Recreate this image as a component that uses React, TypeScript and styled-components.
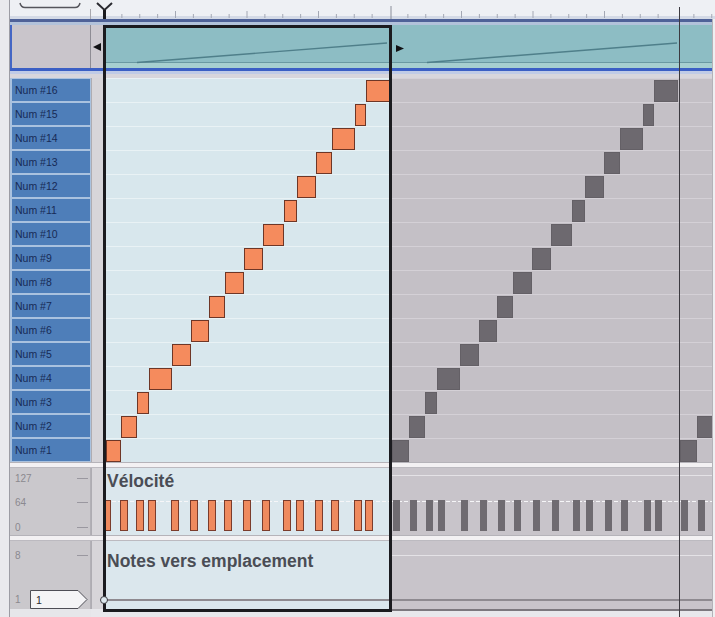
import React from 'react';
import styled, { createGlobalStyle, css } from 'styled-components';

const GlobalStyle = createGlobalStyle`
  html, body { margin: 0; padding: 0; background: #e8e8ec; }
  body { font-family: 'Liberation Sans', Arial, sans-serif; }
  * { box-sizing: border-box; }
`;

type Tone = 'loop' | 'gray';

const ROW_H = 24;
const ROWS = 16;
// note starts inside one pattern (px from the pattern origin), last value = pattern length
const PATTERN = [0, 17, 33, 45, 68, 87, 105, 121, 140, 159, 180, 193, 212, 228, 251, 262, 286];

const Frame = styled.div`
  width: 715px;
  height: 617px;
  overflow: hidden;
  display: flex;
  flex-direction: column;
  background: #e8e8ec;
`;

const RulerSvg = styled.svg`
  display: block;
  flex: none;
`;

const Body = styled.div`
  display: flex;
  flex: 1;
  min-height: 0;
`;

const Column = styled.div<{ $w: number }>`
  width: ${({ $w }) => $w}px;
  flex: none;
  display: flex;
  flex-direction: column;
`;

const MarginCol = styled.div`
  width: 10px;
  flex: none;
  background: #e9e9ed;
  border-right: 1px solid #9c9ca4;
`;

const EdgeCol = styled.div`
  flex: 1;
  background: #efeff1;
  border-left: 1px solid #b4b2b8;
`;

const TopBlue = styled.div`
  height: 6px;
  flex: none;
  background: linear-gradient(#4f6298 0 3px, #b2c2da 3px 6px);
`;

const BottomBlue = styled.div`
  height: 6px;
  flex: none;
  background: linear-gradient(#3b5fc4 0 3px, #c0cbe6 3px 6px);
`;

const Gap = styled.div`
  height: 4px;
  flex: none;
  background: #d8d6dc;
`;

const Sep = styled.div`
  height: 6px;
  flex: none;
  background: linear-gradient(#b5b3b9 0 1px, #f3f1f3 1px 5px, #bcbac0 5px 6px);
`;

const LoopBox = styled.div`
  display: flex;
  flex-direction: column;
  border: 3px solid #1b1b1f;
`;

const SegHeader = styled.div<{ $h: number }>`
  height: ${({ $h }) => $h}px;
  flex: none;
  display: flex;
  background: linear-gradient(
    to bottom,
    #8dbdc4 0,
    #8dbdc4 calc(100% - 6px),
    #6a99a2 calc(100% - 6px),
    #6a99a2 calc(100% - 5px),
    #a6cfd0 calc(100% - 5px)
  );
  svg {
    display: block;
    width: 100%;
    height: 100%;
  }
`;

const Grid = styled.div<{ $tone: Tone }>`
  position: relative;
  height: ${ROWS * ROW_H}px;
  flex: none;
  display: flex;
  flex-direction: column;
  overflow: hidden;
  background: ${({ $tone }) => ($tone === 'loop' ? '#d8e7ed' : '#c4c0c6')};
`;

const GridRow = styled.div<{ $tone: Tone }>`
  height: ${ROW_H}px;
  flex: none;
  border-top: 1px solid ${({ $tone }) => ($tone === 'loop' ? '#e9f2f5' : '#d4d0d6')};
`;

const Note = styled.div<{ $tone: Tone }>`
  position: absolute;
  height: 22px;
  ${({ $tone }) =>
    $tone === 'loop'
      ? css`
          background: #f58b5d;
          border: 1px solid #6e3626;
        `
      : css`
          background: #6d696f;
          border: 1px solid #646066;
        `}
`;

const Lane = styled.div<{ $tone: Tone; $h: number }>`
  position: relative;
  height: ${({ $h }) => $h}px;
  flex: none;
  background: ${({ $tone }) => ($tone === 'loop' ? '#dbe7ed' : '#c8c4ca')};
`;

const VelLane = styled(Lane)`
  overflow: hidden;
`;

const LaneTitle = styled.div<{ $pt: number }>`
  padding: ${({ $pt }) => $pt}px 0 0 1px;
  font-size: 17.5px;
  line-height: 20px;
  font-weight: bold;
  color: #4a4d55;
  white-space: nowrap;
`;

const Guide = styled.div<{ $top: number; $kind: 'white' | 'dash' | 'dark' }>`
  position: absolute;
  left: 0;
  right: 0;
  top: ${({ $top }) => $top}px;
  height: ${({ $kind }) => ($kind === 'dark' ? 2 : 1)}px;
  ${({ $kind }) =>
    $kind === 'dark'
      ? css`
          background: #8e8a90;
        `
      : $kind === 'white'
      ? css`
          background: #e4e2e6;
        `
      : css`
          background: repeating-linear-gradient(to right, #f6f6f8 0 4px, transparent 4px 6px);
        `}
`;

const VelBar = styled.div<{ $tone: Tone }>`
  position: absolute;
  top: 32px;
  height: 31px;
  ${({ $tone }) =>
    $tone === 'loop'
      ? css`
          width: 8px;
          background: #ef8a5e;
          border: 1px solid #7b3c2c;
        `
      : css`
          width: 7px;
          background: #6f6b71;
        `}
`;

const Marker = styled.div`
  position: absolute;
  left: -6px;
  top: 55px;
  width: 8px;
  height: 8px;
  border-radius: 50%;
  border: 1.5px solid #3a3a40;
  background: #dde8ee;
`;

const BottomLine = styled.div`
  height: 2px;
  flex: none;
  background: #7c787e;
`;

const Seg2Col = styled(Column)`
  border-right: 1px solid #3c3a40;
`;

/* left label column */

const LabelHeader = styled.div`
  height: 43px;
  flex: none;
  background: #c9c5cb;
  border-left: 2px solid #4466c4;
  border-right: 1px solid #8e8c94;
`;

const Labels = styled.div`
  height: ${ROWS * ROW_H}px;
  flex: none;
  display: flex;
  flex-direction: column;
  padding: 0 1px 0 2px;
  background: #aac2df;
`;

const Label = styled.div`
  height: 22px;
  margin: 1px 0;
  flex: none;
  display: flex;
  align-items: center;
  padding-left: 3px;
  background: #4e7eb9;
  color: #172a55;
  font-size: 10.5px;
`;

const ScaleBox = styled.div<{ $h: number; $pt: number; $pb: number }>`
  height: ${({ $h }) => $h}px;
  flex: none;
  display: flex;
  flex-direction: column;
  justify-content: space-between;
  padding: ${({ $pt, $pb }) => `${$pt}px 2px ${$pb}px 5px`};
  background: #cac8cc;
  border-right: 1px solid #b2b0b6;
`;

const ScaleRow = styled.div<{ $h?: number }>`
  height: ${({ $h }) => $h ?? 12}px;
  display: flex;
  align-items: center;
  justify-content: space-between;
  font-size: 10px;
  color: #8b898f;
`;

const Tick = styled.span`
  width: 11px;
  height: 1px;
  background: #9a98a0;
`;

const SlotBox = styled.svg`
  display: block;
  margin-left: auto;
`;

const LabelBottom = styled.div`
  flex: 1;
  background: #e6e6ea;
`;

/* gutter */

const GutterHeader = styled.div`
  height: 43px;
  flex: none;
  display: flex;
  align-items: center;
  justify-content: center;
  background: #cdc9cf;
`;

const LeftTri = styled.span`
  width: 0;
  height: 0;
  border-top: 4px solid transparent;
  border-bottom: 4px solid transparent;
  border-right: 8px solid #111114;
`;

const GutterFill = styled.div<{ $h: number }>`
  height: ${({ $h }) => $h}px;
  flex: none;
  background: #d7d5d9;
  border-left: 1px solid #aeacb2;
`;

function Ruler() {
  const ticks: React.ReactNode[] = [];
  for (let k = 0; ; k++) {
    const x = 104 + k * 17.875;
    if (x > 712) break;
    if (k % 16 === 0) continue;
    const y1 = k % 4 === 0 ? 11 : 14;
    ticks.push(<line key={k} x1={x} y1={y1} x2={x} y2={18} stroke="#a4a8b4" strokeWidth={1} />);
  }
  return (
    <RulerSvg width={715} height={19} viewBox="0 0 715 19">
      <rect x={0} y={0} width={10} height={19} fill="#e9e9ed" />
      <rect x={10} y={0} width={705} height={19} fill="#eef0f4" />
      <rect x={10} y={16} width={705} height={3} fill="#d4dae6" />
      <line x1={9.5} y1={0} x2={9.5} y2={19} stroke="#9c9ca4" />
      <path d="M20 3 Q21 7.5 25 7.5 H75 Q79 7.5 80 3" fill="none" stroke="#55555c" strokeWidth={1.5} />
      <line x1={90.5} y1={9} x2={90.5} y2={19} stroke="#a8a8ae" />
      {ticks}
      <line x1={391} y1={6} x2={391} y2={19} stroke="#8a8e9a" strokeWidth={1} />
      <line x1={679.5} y1={7} x2={679.5} y2={19} stroke="#3c3a40" strokeWidth={1} />
      <path d="M97 3 L104.5 10 L112 3" fill="none" stroke="#2a2a30" strokeWidth={2} />
      <line x1={104.5} y1={10} x2={104.5} y2={19} stroke="#1b1b1f" strokeWidth={3} />
    </RulerSvg>
  );
}

function NoteGrid({ tone, origin }: { tone: Tone; origin: number }) {
  return (
    <Grid $tone={tone}>
      {Array.from({ length: ROWS }).map((_, i) => (
        <GridRow key={i} $tone={tone} />
      ))}
      {PATTERN.slice(0, -1).map((start, i) => {
        let left = start + origin;
        let width = PATTERN[i + 1] - start;
        if (left < 0) {
          width += left;
          left = 0;
        }
        return <Note key={i} $tone={tone} style={{ left, width, top: (ROWS - 1 - i) * ROW_H + 2 }} />;
      })}
    </Grid>
  );
}

function Velocity({ tone, origin }: { tone: Tone; origin: number }) {
  return (
    <VelLane $tone={tone} $h={67}>
      {tone === 'gray' && <Guide $top={7} $kind="white" />}
      <Guide $top={33} $kind="dash" />
      {tone === 'loop' && <LaneTitle $pt={3}>Vélocité</LaneTitle>}
      {PATTERN.slice(0, -1).map((start, i) => (
        <VelBar key={i} $tone={tone} style={{ left: start + origin + (tone === 'loop' ? -1 : 1) }} />
      ))}
    </VelLane>
  );
}

function NotesLane({ tone }: { tone: Tone }) {
  return (
    <Lane $tone={tone} $h={68}>
      {tone === 'gray' && <Guide $top={14} $kind="white" />}
      <Guide $top={58} $kind="dark" />
      {tone === 'loop' && (
        <>
          <LaneTitle $pt={10}>Notes vers emplacement</LaneTitle>
          <Marker />
        </>
      )}
    </Lane>
  );
}

function RampHeader({ w, h, from, to, arrow }: { w: number; h: number; from: number; to: number; arrow?: boolean }) {
  return (
    <SegHeader $h={h}>
      <svg viewBox={`0 0 ${w} ${h}`} preserveAspectRatio="none">
        {to > from && (
          <polyline
            points={`${from},${h - 5.5} ${to},${h - 25}`}
            fill="none"
            stroke="#4f7f8a"
            strokeWidth={1.4}
          />
        )}
        {arrow && <polygon points={`4,${h - 23} 12,${h - 19.5} 4,${h - 16}`} fill="#111114" />}
      </svg>
    </SegHeader>
  );
}

function GraySegment({ w, origin, ramp }: { w: number; origin: number; ramp?: boolean }) {
  return (
    <>
      <TopBlue />
      {ramp ? <RampHeader w={w} h={43} from={35} to={285} arrow /> : <RampHeader w={w} h={43} from={0} to={0} />}
      <BottomBlue />
      <Gap />
      <NoteGrid tone="gray" origin={origin} />
      <Sep />
      <Velocity tone="gray" origin={origin} />
      <Sep />
      <NotesLane tone="gray" />
      <BottomLine />
    </>
  );
}

export default function App() {
  return (
    <>
      <GlobalStyle />
      <Frame>
        <Ruler />
        <Body>
          <MarginCol />

          <Column $w={81}>
            <TopBlue />
            <LabelHeader />
            <BottomBlue />
            <Gap />
            <Labels>
              {Array.from({ length: ROWS }).map((_, i) => (
                <Label key={i}>Num #{ROWS - i}</Label>
              ))}
            </Labels>
            <Sep />
            <ScaleBox $h={67} $pt={4} $pb={2}>
              <ScaleRow>
                <span>127</span>
                <Tick />
              </ScaleRow>
              <ScaleRow>
                <span>64</span>
                <Tick />
              </ScaleRow>
              <ScaleRow>
                <span>0</span>
                <Tick />
              </ScaleRow>
            </ScaleBox>
            <Sep />
            <ScaleBox $h={68} $pt={8} $pb={0}>
              <ScaleRow>
                <span>8</span>
                <Tick />
              </ScaleRow>
              <ScaleRow $h={19}>
                <span>1</span>
                <SlotBox width={58} height={19} viewBox="0 0 58 19">
                  <polygon points="0.5,0.5 48,0.5 57,9.5 48,18.5 0.5,18.5" fill="#f4f4f6" stroke="#4e4e56" />
                  <text x={6} y={14} fontSize={10.5} fill="#2a2a30" fontFamily="'Liberation Sans', Arial, sans-serif">
                    1
                  </text>
                </SlotBox>
              </ScaleRow>
            </ScaleBox>
            <LabelBottom />
          </Column>

          <Column $w={12}>
            <TopBlue />
            <GutterHeader>
              <LeftTri />
            </GutterHeader>
            <BottomBlue />
            <Gap />
            <GutterFill $h={ROWS * ROW_H} />
            <Sep />
            <GutterFill $h={67} />
            <Sep />
            <GutterFill $h={68} />
          </Column>

          <Column $w={289}>
            <TopBlue />
            <LoopBox>
              <RampHeader w={283} h={40} from={31} to={281} />
              <BottomBlue />
              <Gap />
              <NoteGrid tone="loop" origin={-2} />
              <Sep />
              <Velocity tone="loop" origin={-2} />
              <Sep />
              <NotesLane tone="loop" />
            </LoopBox>
          </Column>

          <Seg2Col $w={288}>
            <GraySegment w={287} origin={0} ramp />
          </Seg2Col>

          <Column $w={32}>
            <GraySegment w={32} origin={0} />
          </Column>

          <EdgeCol />
        </Body>
      </Frame>
    </>
  );
}
